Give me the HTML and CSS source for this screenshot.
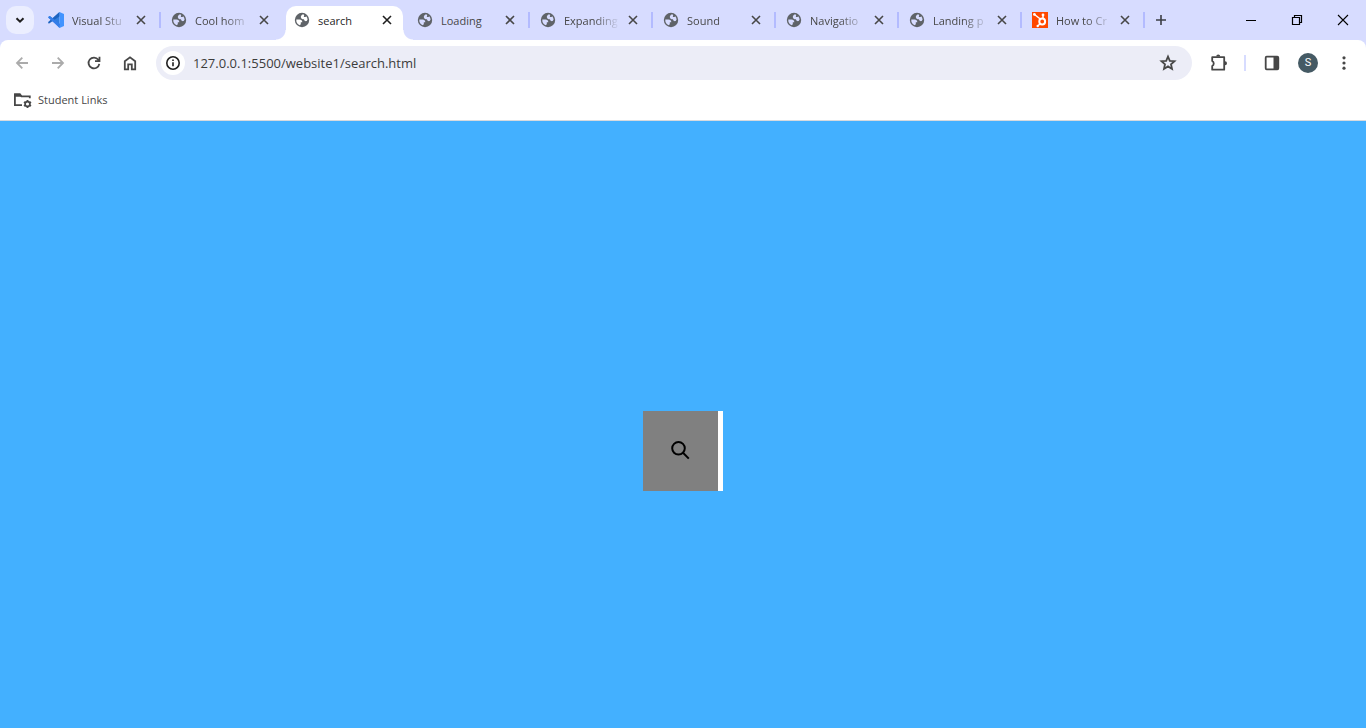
FILE: index.html
```html
<!DOCTYPE html>
<html lang="en">
<head>
<meta charset="utf-8">
<meta name="viewport" content="width=device-width, initial-scale=1">
<title>search</title>
<link rel="stylesheet" href="styles.css">
</head>
<body>
<svg class="defs" aria-hidden="true">
  <symbol id="globe" viewBox="-1 0 16 16"><circle cx="7" cy="8" r="7.200" fill="#5f6368"/><path class="land" d="M7.300 2.400C6.200 3.200 5.600 4.300 5.900 5.500 6.200 6.900 7.400 7.300 8.900 7.300 9.300 8.700 10.300 9.500 11.700 9.100L12.600 7.400A5.700 5.700 0 0 0 11.200 4.200C10.600 5.100 9.800 5.300 8.700 4.900 9.300 4.200 9.300 3.200 8.800 2.600z"/><path class="land" d="M1.300 7.500H4.600C6.200 7.500 7.300 8.600 7.300 10.200H5.800V12.300L4.700 13.200A5.700 5.700 0 0 1 1.300 7.500z"/></symbol>
  <symbol id="close" viewBox="0 0 16 16"><path d="m4 4 8 8m0-8-8 8" fill="none" stroke="currentColor" stroke-width="1.600"/></symbol>
</svg>
<header class="browser">
  <div class="strip">
    <button class="tab-search" aria-label="Search tabs"><svg width="12" height="12" viewBox="0 0 12 12"><path d="m2.500 4.200 3.500 3.500 3.500-3.500" fill="none" stroke="#1f1f1f" stroke-width="2"/></svg></button>
    <nav class="tabs" aria-label="Tabs">
      <div class="tab">
        <svg class="favicon" viewBox="0 0 16 16"><path d="M11.500 0 4.800 6.200 1.800 4 .3 4.800v1L9 12.800 11.500 16V0z" fill="#2f7ee0"/><path d="M11.700 4.200.8 11.800l-.6-1v-.9L11.500 0z" fill="#1c63c0"/><path d="M11.500 0 16 2v12l-4.500 2z" fill="#4294ff"/><path d="m.3 5.400 1.500-1.300L12 12l-.5 4z" fill="#347de9"/></svg>
        <a class="title" href="#">Visual Stu</a><button class="close" aria-label="Close tab"><svg><use href="#close"/></svg></button>
      </div>
      <div class="tab before-active">
        <svg class="favicon"><use href="#globe"/></svg>
        <a class="title" href="#">Cool hom</a><button class="close" aria-label="Close tab"><svg><use href="#close"/></svg></button>
      </div>
      <div class="tab active">
        <svg class="favicon"><use href="#globe"/></svg>
        <a class="title" href="#" aria-current="page">search</a><button class="close" aria-label="Close tab"><svg><use href="#close"/></svg></button>
      </div>
      <div class="tab">
        <svg class="favicon"><use href="#globe"/></svg>
        <a class="title" href="#">Loading</a><button class="close" aria-label="Close tab"><svg><use href="#close"/></svg></button>
      </div>
      <div class="tab">
        <svg class="favicon"><use href="#globe"/></svg>
        <a class="title" href="#">Expanding</a><button class="close" aria-label="Close tab"><svg><use href="#close"/></svg></button>
      </div>
      <div class="tab">
        <svg class="favicon"><use href="#globe"/></svg>
        <a class="title" href="#">Sound</a><button class="close" aria-label="Close tab"><svg><use href="#close"/></svg></button>
      </div>
      <div class="tab">
        <svg class="favicon"><use href="#globe"/></svg>
        <a class="title" href="#">Navigatio</a><button class="close" aria-label="Close tab"><svg><use href="#close"/></svg></button>
      </div>
      <div class="tab">
        <svg class="favicon"><use href="#globe"/></svg>
        <a class="title" href="#">Landing p</a><button class="close" aria-label="Close tab"><svg><use href="#close"/></svg></button>
      </div>
      <div class="tab">
        <svg class="favicon" viewBox="0 0 16 16"><path fill="#ff4800" d="M0 0h16v16H0z"/><g fill="none" stroke="#fff"><circle cx="10.200" cy="9.500" r="2.900" stroke-width="2"/><path d="M2.500 2.500 8.300 7M11 3.500v3M8 11.800l-2.200 2.200" stroke-width="1.500"/></g><circle cx="2.400" cy="2.400" r="1.400" fill="#fff"/><circle cx="11" cy="3" r="1.400" fill="#fff"/><circle cx="5.700" cy="14" r="1.200" fill="#fff"/></svg>
        <a class="title" href="#">How to Cr</a><button class="close" aria-label="Close tab"><svg><use href="#close"/></svg></button>
      </div>
    </nav>
    <button class="new-tab" aria-label="New tab"><svg width="12" height="12" viewBox="0 0 12 12"><path d="M6 1v10M1 6h10" stroke="#3c3e45" stroke-width="1.600"/></svg></button>
    <div class="window-controls">
      <button aria-label="Minimize"><svg width="12" height="12" viewBox="0 0 12 12"><path d="M1 6.500h10" stroke="#000"/></svg></button>
      <button aria-label="Restore"><svg width="12" height="12" viewBox="0 0 12 12"><path d="M1.500 3.500h7v7h-7zM3.500 3.500v-2h7v7h-2" fill="none" stroke="#000" stroke-width="1.200"/></svg></button>
      <button aria-label="Close window"><svg width="12" height="12" viewBox="0 0 12 12"><path d="m1 1 10 10m0-10L1 11" stroke="#000" stroke-width="1.100"/></svg></button>
    </div>
  </div>
  <div class="panel">
    <div class="toolbar">
      <button class="tool muted" aria-label="Back"><svg viewBox="0 0 18 18"><path d="M15 9H4m5.300-5.300L4 9l5.300 5.300"/></svg></button>
      <button class="tool muted" aria-label="Forward"><svg viewBox="0 0 18 18"><path d="M3 9h11M8.700 3.700 14 9l-5.300 5.300"/></svg></button>
      <button class="tool" aria-label="Reload"><svg viewBox="0 0 18 18"><path d="M14.300 9.800A5.400 5.400 0 1 1 13.300 5.700L14.500 7M14.500 2.700V7.200H10"/></svg></button>
      <button class="tool" aria-label="Home"><svg viewBox="0 0 18 18"><path d="M3.800 7.300 9 3.400l5.200 3.900v8h-3.400v-5H7.200v5H3.800z"/></svg></button>
      <div class="omnibox">
        <button class="info" aria-label="Site information"><svg width="16" height="16" viewBox="0 0 16 16"><circle cx="8" cy="8" r="6.200" fill="none" stroke="#1f1f1f" stroke-width="1.600"/><path d="M8 7.300v4M8 4.500v1.500" stroke="#1f1f1f" stroke-width="1.600"/></svg></button>
        <input class="url" type="text" aria-label="Address" value="127.0.0.1:5500/website1/search.html">
        <button class="star" aria-label="Bookmark this tab"><svg viewBox="0 0 18 18"><path d="m9 2.500 1.800 4.300 4.700.4-3.500 3.100 1 4.600-4-2.500-4 2.500 1-4.600-3.500-3.100 4.700-.4z"/></svg></button>
      </div>
      <button class="tool" aria-label="Extensions"><svg viewBox="0 0 18 18"><path d="M3.200 3.200h12v12.500h-12v-3.700a2.800 2.800 0 0 0 0-5z" stroke-linejoin="round"/><path d="M7.200 2.600a2 2 0 0 1 4 0zM16 7.200a2 2 0 0 1 0 4z" fill="#474747" stroke="none"/></svg></button>
      <span class="divider"></span>
      <button class="tool" aria-label="Side panel"><svg viewBox="0 0 18 18"><rect x="2.700" y="2.700" width="12.600" height="12.600" rx="1"/><path d="M10.500 3h4.800v12.300h-4.800z" fill="#474747" stroke="none"/></svg></button>
      <button class="tool" aria-label="Profile"><span class="avatar">S</span></button>
      <button class="tool" aria-label="Menu"><svg viewBox="0 0 18 18"><g fill="#474747" stroke="none"><circle cx="9" cy="3.800" r="1.600"/><circle cx="9" cy="9" r="1.600"/><circle cx="9" cy="14.200" r="1.600"/></g></svg></button>
    </div>
    <nav class="bookmarks" aria-label="Bookmarks">
      <a class="bookmark" href="#">
        <svg width="20" height="16" viewBox="0 0 20 16"><path d="M10 13.200H2.900V2.500H8l1.500 1.800h8.300v2" fill="none" stroke="#474747" stroke-width="1.800"/><path d="M2.200 1.500h6l2 3.200h-8z" fill="#474747"/><circle cx="15.500" cy="12" r="2.400" fill="none" stroke="#474747" stroke-width="1.700"/><path d="M15.500 8v1.500M15.500 14.500V16M12 10l1.300.8M17.700 13.200l1.300.8M12 14l1.300-.8M17.700 10.800l1.300-.8" stroke="#474747" stroke-width="1.800"/></svg>
        Student Links
      </a>
    </nav>
  </div>
</header>
<main class="page">
  <form class="search-box">
    <button class="search-button" type="button" aria-label="Search"><svg width="20" height="20" viewBox="0 0 20 20"><circle cx="7.500" cy="7.300" r="6.300"/><path d="m12 11.800 5.800 5.800"/></svg></button>
    <input class="search-field" type="text" aria-label="Search text">
  </form>
</main>
</body>
</html>
```
FILE: styles.css
```css
* {
  box-sizing: border-box;
}

body {
  margin: 0;
  min-height: 100vh;
  display: flex;
  flex-direction: column;
  font-family: "Open Sans", "Noto Sans", sans-serif;
  font-size: 11px;
  color: #474747;
}

button {
  display: flex;
  align-items: center;
  justify-content: center;
  flex: none;
  padding: 0;
  border: 0;
  background: none;
  color: inherit;
  font: inherit;
}

a {
  color: inherit;
  text-decoration: none;
}

svg {
  display: block;
  flex: none;
}

.defs {
  position: absolute;
  width: 0;
  height: 0;
}

.browser {
  background: #d7dcff;
}

.strip {
  display: flex;
  height: 40px;
  padding-left: 6px;
}

.tab-search {
  width: 28px;
  height: 28px;
  margin: 6px 4px 0 0;
  border-radius: 10px;
  background: #ebeeff;
}

.tabs {
  display: flex;
  flex: 0 1 1107px;
  min-width: 0;
}

.tab {
  position: relative;
  display: flex;
  align-items: center;
  flex: 1 1 0;
  min-width: 0;
  padding: 0 12px 0 10px;
}

.tab::after {
  content: "";
  position: absolute;
  right: 0;
  top: 12px;
  width: 2px;
  height: 16px;
  background: #b3bbff;
}

.before-active::after {
  display: none;
}

.active::before {
  content: "";
  position: absolute;
  inset: 6px 4px 0 2px;
  border-radius: 10px 10px 0 0;
  background: #fff;
}

.active::after {
  left: -8px;
  right: -6px;
  top: 30px;
  width: auto;
  height: 10px;
  background:
    radial-gradient(circle at 0 0, transparent 9px, #fff 10px) left / 10px 10px no-repeat,
    radial-gradient(circle at 100% 0, transparent 9px, #fff 10px) right / 10px 10px no-repeat;
}

.favicon {
  position: relative;
  width: 16px;
  height: 16px;
  color: #d7dcff;
}

.active .favicon {
  color: #fff;
}

.land {
  fill: currentColor;
}

.title {
  position: relative;
  flex: 1;
  min-width: 0;
  margin: 0 2px 0 8px;
  padding-top: 1px;
  overflow: hidden;
  white-space: nowrap;
  line-height: 16px;
  mask-image: linear-gradient(to right, #000 30px, transparent 56px);
}

.active .title,
.active + .tab .title {
  mask-image: none;
}

.active .title,
.active .close {
  color: #1f1f1f;
}

.close {
  position: relative;
  width: 16px;
  height: 16px;
}

.close svg {
  width: 16px;
  height: 16px;
}

.new-tab {
  width: 28px;
  height: 28px;
  margin: 6px 0 0 2px;
}

.window-controls {
  display: flex;
  margin-left: auto;
}

.window-controls button {
  width: 46px;
}

.panel {
  border-bottom: 1px solid #d8dade;
  border-radius: 8px 8px 0 0;
  background: #fff;
}

.toolbar {
  display: flex;
  align-items: center;
  padding: 6px 4px;
}

.tool {
  width: 36px;
  height: 34px;
}

.tool svg,
.star svg {
  width: 18px;
  height: 18px;
  fill: none;
  stroke: #474747;
  stroke-width: 1.8;
}

.muted svg {
  stroke: #ababab;
}

.omnibox {
  display: flex;
  align-items: center;
  flex: 1;
  height: 34px;
  margin: 0 8px;
  padding: 0 15px 0 5px;
  border-radius: 17px;
  background: #ecedf7;
}

.info {
  width: 24px;
  height: 24px;
  border-radius: 50%;
  background: #fff;
}

.url {
  flex: 1;
  min-width: 0;
  padding: 0 8px;
  border: 0;
  outline: 0;
  background: none;
  color: #3c3c3c;
  font: inherit;
  font-size: 13px;
}

.divider {
  width: 2px;
  height: 16px;
  margin: 0 8px;
  background: #d7dcff;
}

.avatar {
  width: 20px;
  border-radius: 50%;
  background: #455a64;
  color: #fff;
  font-family: Roboto, sans-serif;
  font-size: 11px;
  line-height: 20px;
}

.bookmarks {
  display: flex;
  padding: 4px 12px 10px;
}

.bookmark {
  display: flex;
  align-items: center;
  gap: 6px;
  line-height: 20px;
}

.page {
  display: flex;
  flex: 1;
  align-items: center;
  justify-content: center;
  padding-top: 53px;
  background: #43b0ff;
}

.search-box {
  display: flex;
  width: 80px;
  height: 80px;
  background: #fff;
}

.search-button {
  width: 75px;
  background: #808080;
}

.search-button svg {
  fill: none;
  stroke: #000;
  stroke-width: 2;
}

.search-field {
  flex: 1;
  min-width: 0;
  padding: 0;
  border: 0;
  outline: 0;
  background: #fff;
}
```
